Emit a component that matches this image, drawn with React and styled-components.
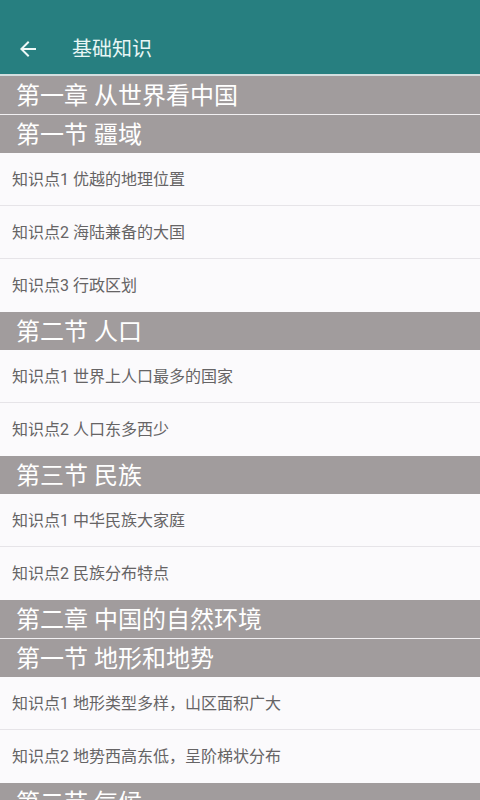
import React from "react";
import styled, { createGlobalStyle } from "styled-components";

const Global = createGlobalStyle`
  html, body { margin: 0; padding: 0; background: #fbfafc; }
  body { font-family: Roboto, "Noto Sans CJK SC", sans-serif; }
  * { box-sizing: border-box; }
`;

const Page = styled.div`
  width: 480px;
  height: 800px;
  background: #fbfafc;
  overflow: hidden;
`;

const AppBar = styled.header`
  background: #277f80;
  padding-top: 24px;
  border-bottom: 2px solid #d3dfe0;
`;

const Toolbar = styled.div`
  height: 50px;
  display: flex;
  align-items: center;
  padding-left: 16px;
  gap: 32px;
`;

const Title = styled.h1`
  margin: 0;
  font-size: 20px;
  font-weight: 400;
  color: #e8f6f5;
  line-height: 1;
`;

const BackIcon = styled.svg`
  width: 24px;
  height: 24px;
  fill: #eef8f7;
  display: block;
`;

const GroupHeader = styled.div`
  height: ${(p) => (p.$chapter ? "39px" : "38px")};
  background: #a19c9d;
  color: #ffffff;
  font-size: 24px;
  line-height: 1;
  display: flex;
  align-items: center;
  padding-left: 16px;
  padding-top: 2px;
  border-bottom: ${(p) => (p.$chapter ? "1px solid #f2f0f2" : "none")};
`;

const Item = styled.div`
  height: 53px;
  display: flex;
  align-items: center;
  padding-left: 12px;
  padding-bottom: 3px;
  font-size: 16px;
  color: #666465;
  background: #fbfafc;
  border-bottom: ${(p) => (p.$last ? "none" : "1px solid #e6e4e8")};
`;

const data = [
  { type: "chapter", text: "第一章 从世界看中国" },
  { type: "section", text: "第一节 疆域" },
  { type: "item", text: "知识点1 优越的地理位置" },
  { type: "item", text: "知识点2 海陆兼备的大国" },
  { type: "item", text: "知识点3 行政区划", last: true },
  { type: "section", text: "第二节 人口" },
  { type: "item", text: "知识点1 世界上人口最多的国家" },
  { type: "item", text: "知识点2 人口东多西少", last: true },
  { type: "section", text: "第三节 民族" },
  { type: "item", text: "知识点1 中华民族大家庭" },
  { type: "item", text: "知识点2 民族分布特点", last: true },
  { type: "chapter", text: "第二章 中国的自然环境" },
  { type: "section", text: "第一节 地形和地势" },
  { type: "item", text: "知识点1 地形类型多样，山区面积广大" },
  { type: "item", text: "知识点2 地势西高东低，呈阶梯状分布", last: true },
  { type: "section", text: "第二节 气候" },
  { type: "item", text: "知识点1 冬季南北温差大，夏季普遍高温" },
];

export default function App() {
  return (
    <Page>
      <Global />
      <AppBar>
        <Toolbar>
          <BackIcon viewBox="0 0 24 24">
            <path d="M20 11H7.83l5.59-5.59L12 4l-8 8 8 8 1.41-1.41L7.83 13H20v-2z" />
          </BackIcon>
          <Title>基础知识</Title>
        </Toolbar>
      </AppBar>
      {data.map((d, i) =>
        d.type === "item" ? (
          <Item key={i} $last={d.last}>
            {d.text}
          </Item>
        ) : (
          <GroupHeader key={i} $chapter={d.type === "chapter"}>
            {d.text}
          </GroupHeader>
        )
      )}
    </Page>
  );
}
